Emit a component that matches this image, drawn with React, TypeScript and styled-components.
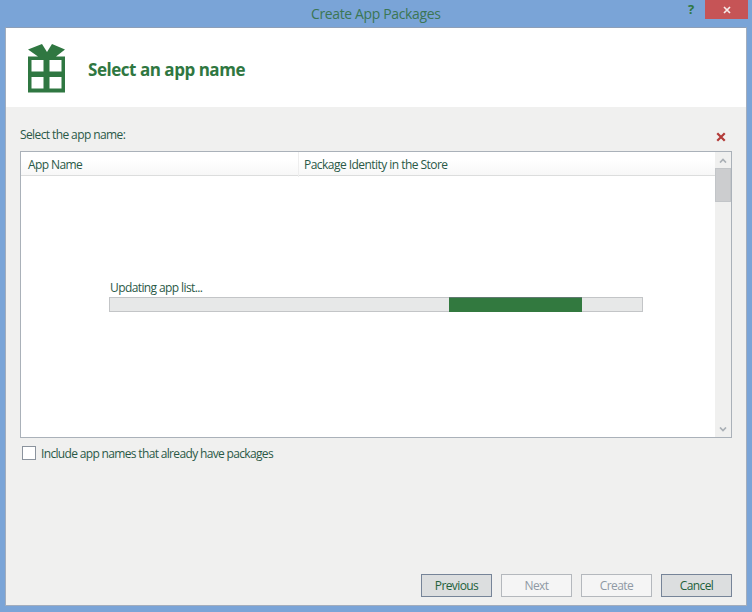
import React from "react";
import styled, { createGlobalStyle } from "styled-components";

const GREEN = "#2f7741";

const GlobalStyle = createGlobalStyle`
  * { box-sizing: border-box; }
  body { margin: 0; overflow: hidden; }
`;

const Window = styled.div`
  width: 752px;
  height: 612px;
  padding: 0 5px 6px;
  display: flex;
  flex-direction: column;
  background: #7aa4d7;
  font-family: "Open Sans", "Noto Sans", sans-serif;
  font-size: 12px;
  font-weight: 500;
  color: #2a5947;
`;

const Text = styled.span<{ $spacing?: number }>`
  white-space: nowrap;
  letter-spacing: ${(p) => p.$spacing ?? -0.6}px;
`;

const TitleBar = styled.header`
  height: 27px;
  flex: none;
  display: grid;
  grid-template-columns: 1fr 130px 1fr;
`;

const Title = styled.h1`
  grid-column: 2;
  margin: 0;
  font-size: 14px;
  font-weight: 400;
  line-height: 28px;
  color: #3b7654;
  white-space: nowrap;
`;

const Controls = styled.div`
  display: flex;
  justify-content: flex-end;
  align-items: flex-start;
  margin-right: -1px;
`;

const HelpButton = styled.button`
  width: 28px;
  height: 19px;
  padding: 0;
  border: 0;
  background: none;
  font: 700 13px/19px "Open Sans", sans-serif;
  color: ${GREEN};
`;

const CloseButton = styled.button`
  width: 43px;
  height: 19px;
  padding: 0;
  border: 0;
  display: grid;
  place-items: center;
  background: #c65456;
`;

const Dialog = styled.main`
  flex: 1;
  display: flex;
  flex-direction: column;
  border: 1px solid #a2adbd;
  border-top-color: #8d9fb8;
  background: #f0f0ef;
`;

const Banner = styled.div`
  height: 79px;
  flex: none;
  display: flex;
  align-items: center;
  padding: 2px 0 0 22px;
  background: #fff;
`;

const Heading = styled.h2`
  margin: 1px 0 0 22px;
  font-size: 17px;
  font-weight: 700;
  color: ${GREEN};
`;

const Body = styled.section`
  flex: 1;
  display: flex;
  flex-direction: column;
  padding: 0 14px;
`;

const LabelRow = styled.div`
  height: 44px;
  display: flex;
  justify-content: space-between;
  padding: 19px 6px 0 0;
  line-height: 18px;

  svg { margin-top: 6px; }
`;

const ListBox = styled.div`
  height: 287px;
  display: flex;
  border: 1px solid #aab1b9;
  background: #fff;
`;

const ListContent = styled.div`
  flex: 1;
  display: flex;
  flex-direction: column;
`;

const ColumnHeaders = styled.div`
  height: 24px;
  display: grid;
  grid-template-columns: 277px 1fr;
  border-bottom: 1px solid #dcdddd;
  background: linear-gradient(#fff 35%, #f7f7f7);
  line-height: 25px;
`;

const ColumnHeader = styled.div`
  padding-left: 7px;

  & + & {
    padding-left: 5px;
    border-left: 1px solid #eeeeee;
  }
`;

const Loading = styled.div`
  width: 534px;
  margin: 103px 0 0 88px;
  line-height: 17px;

  > span { margin-left: 1px; }
`;

const Track = styled.div`
  height: 15px;
  margin-top: 1px;
  padding-left: 339px;
  border: 1px solid #c3c5c7;
  background: #e7e8e8;
`;

const Chunk = styled.div`
  width: 133px;
  height: 15px;
  margin-top: -1px;
  background: #32793f;
  border-top: 1px solid #60796f;
`;

const ScrollBar = styled.div`
  width: 16px;
  display: flex;
  flex-direction: column;
  align-items: center;
  background: #f0f0ef;
`;

const ArrowSlot = styled.div`
  height: 16px;
  display: grid;
  place-items: center;
`;

const Thumb = styled.div`
  width: 16px;
  height: 34px;
  margin-bottom: auto;
  border: 1px solid #c2c5c8;
  background: #cccdcf;
`;

const CheckRow = styled.label`
  height: 30px;
  display: flex;
  align-items: center;
  gap: 5px;
  padding-left: 2px;
`;

const CheckBox = styled.input`
  appearance: none;
  width: 14px;
  height: 14px;
  margin: 0;
  border: 1px solid #8b939d;
  background: #fff;
`;

const Actions = styled.footer`
  display: flex;
  justify-content: flex-end;
  gap: 9px;
  margin: auto 0 8px;
`;

const ActionButton = styled.button`
  width: 71px;
  height: 23px;
  padding: 1px 0 0;
  border: 1px solid #768498;
  background: #dcdedf;
  font: 500 12px/20px "Open Sans", "Noto Sans", sans-serif;
  color: #23613b;

  &:disabled {
    border-color: #b4b8bd;
    background: #f5f5f5;
    color: #8f99a4;
  }
`;

const GiftIcon = () => (
  <svg width="38" height="49" viewBox="0 0 38 49" fill={GREEN}>
    <path d="M0 5.5 14 0 19 8 24 0 37 5.5 28 12.5H37V48.5H0V12.5H10Z" />
    <path fill="#fff" d="M3.5 16H15.5V27.5H3.5ZM21.5 16H33.5V27.5H21.5ZM3.5 33H15.5V44.5H3.5ZM21.5 33H33.5V44.5H21.5Z" />
  </svg>
);

const Cross = ({ size, color, width }: { size: number; color: string; width: number }) => (
  <svg width={size} height={size} viewBox="0 0 8 8" stroke={color} strokeWidth={width}>
    <path d="M1 1 7 7M7 1 1 7" />
  </svg>
);

const Arrow = ({ down = false }: { down?: boolean }) => (
  <svg width="8" height="5" viewBox="0 0 8 5" fill="none" stroke="#a9afb5" strokeWidth="1.7">
    <path d={down ? "M1 .5 4 3.5 7 .5" : "M1 4.5 4 1.5 7 4.5"} />
  </svg>
);

export default function App() {
  return (
    <>
      <GlobalStyle />
      <Window>
        <TitleBar>
          <Title><Text $spacing={-0.37}>Create App Packages</Text></Title>
          <Controls>
            <HelpButton aria-label="Help">?</HelpButton>
            <CloseButton aria-label="Close"><Cross size={8} color="#f6eaea" width={1.7} /></CloseButton>
          </Controls>
        </TitleBar>
        <Dialog>
          <Banner>
            <GiftIcon />
            <Heading><Text $spacing={-0.47}>Select an app name</Text></Heading>
          </Banner>
          <Body>
            <LabelRow>
              <Text>Select the app name:</Text>
              <Cross size={10} color="#b33c39" width={1.8} />
            </LabelRow>
            <ListBox>
              <ListContent>
                <ColumnHeaders>
                  <ColumnHeader><Text>App Name</Text></ColumnHeader>
                  <ColumnHeader><Text $spacing={-0.54}>Package Identity in the Store</Text></ColumnHeader>
                </ColumnHeaders>
                <Loading>
                  <Text>Updating app list...</Text>
                  <Track><Chunk /></Track>
                </Loading>
              </ListContent>
              <ScrollBar>
                <ArrowSlot><Arrow /></ArrowSlot>
                <Thumb />
                <ArrowSlot><Arrow down /></ArrowSlot>
              </ScrollBar>
            </ListBox>
            <CheckRow>
              <CheckBox type="checkbox" />
              <Text $spacing={-0.66}>Include app names that already have packages</Text>
            </CheckRow>
            <Actions>
              <ActionButton><Text>Previous</Text></ActionButton>
              <ActionButton disabled><Text>Next</Text></ActionButton>
              <ActionButton disabled><Text>Create</Text></ActionButton>
              <ActionButton><Text>Cancel</Text></ActionButton>
            </Actions>
          </Body>
        </Dialog>
      </Window>
    </>
  );
}
